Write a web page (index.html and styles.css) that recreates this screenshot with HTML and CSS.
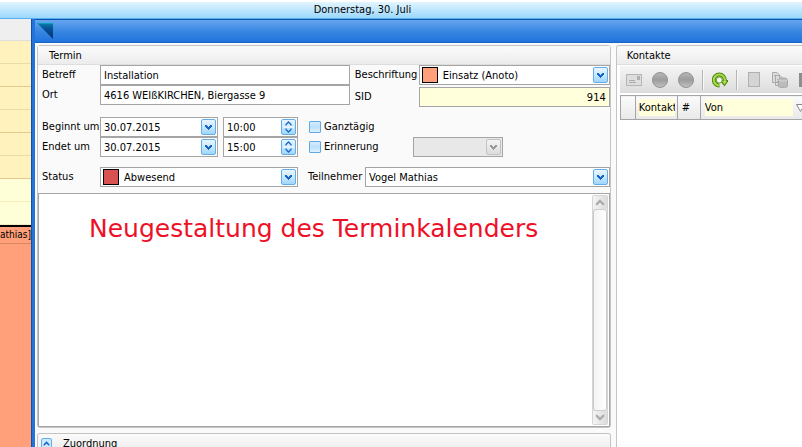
FILE: index.html
```html
<!DOCTYPE html>
<html lang="de">
  <head>
    <meta charset="UTF-8" />
    <meta name="viewport" content="width=device-width, initial-scale=1.0" />
    <title>Terminkalender</title>
    <link rel="stylesheet" href="styles.css">
  </head>
  <body>
    <!-- Shared glyphs -->
    <svg class="sprites" aria-hidden="true">
      <symbol id="arrow-down" viewBox="0 0 13 14">
        <path d="M3 5h2v1h1v1h1v-1h1v-1h2v2h-1v1h-1v1h-1v1h-1v-1h-1v-1h-1v-1h-1z" fill="currentColor" />
      </symbol>
      <symbol id="arrow-up" viewBox="0 0 13 14">
        <path d="M2 8L6.5 3.500L11 8V10H9.500L6.500 7L3.500 10H2Z" fill="currentColor" />
      </symbol>
      <symbol id="scroll-down" viewBox="0 0 13 14">
        <path d="M2 6L6.5 10.500L11 6V4H9.500L6.500 7L3.500 4H2Z" fill="currentColor" />
      </symbol>
      <symbol id="spin" viewBox="0 0 13 14">
        <path d="M4 5.500V4.500L6.500 2L9 4.500V5.500M4 8.500V9.500L6.500 12L9 9.500V8.500" fill="none" stroke="currentColor" stroke-width="1.300" />
        <path d="M1 7h11" stroke="#fff" />
      </symbol>
    </svg>

    <header class="day-header">Donnerstag, 30. Juli</header>

    <div class="workspace">
      <!-- Calendar behind the window -->
      <aside class="calendar">
        <div class="slot slot-head"></div>
        <div class="slot"></div>
        <div class="slot hour"></div>
        <div class="slot"></div>
        <div class="slot hour"></div>
        <div class="slot"></div>
        <div class="slot hour"></div>
        <div class="slot light"></div>
        <div class="slot light"></div>
        <div class="event"><span>athias]</span></div>
      </aside>

      <main class="window">
        <div class="title-bar">
          <svg class="logo" width="16" height="16" viewBox="0 0 16 16">
            <defs>
              <linearGradient id="logo-fill" x1="0" y1="0" x2="0" y2="1">
                <stop offset="0" stop-color="#0a83a8" />
                <stop offset="0.3" stop-color="#08559c" />
                <stop offset="1" stop-color="#03316f" />
              </linearGradient>
            </defs>
            <path d="M0 0H16V16Z" fill="url(#logo-fill)" />
            <path d="M0 0H16V1H1Z" fill="#0c9fb8" />
          </svg>
        </div>

        <div class="columns">
          <div class="left-column">
            <section class="panel appointment">
              <h2>Termin</h2>
              <form class="form">
                <div class="form-row top-fields">
                  <div class="field-group subject">
                    <label for="betreff">Betreff</label>
                    <input type="text" id="betreff" value="Installation" />
                    <label for="ort">Ort</label>
                    <input type="text" id="ort" value="4616 WEIßKIRCHEN, Biergasse 9" />
                  </div>
                  <div class="field-group caption">
                    <label for="beschriftung">Beschriftung</label>
                    <div class="combo swatched">
                      <span class="swatch orange"></span>
                      <select id="beschriftung"><option>Einsatz (Anoto)</option></select>
                      <svg class="drop"><use href="#arrow-down" /></svg>
                    </div>
                    <label for="sid">SID</label>
                    <input type="text" id="sid" class="number" value="914" />
                  </div>
                </div>

                <div class="form-row dates">
                  <label for="beginn">Beginnt um</label>
                  <div class="combo date">
                    <select id="beginn"><option>30.07.2015</option></select>
                    <svg class="drop"><use href="#arrow-down" /></svg>
                  </div>
                  <div class="combo">
                    <input type="text" value="10:00" aria-label="Beginnt um Uhrzeit" />
                    <svg class="drop"><use href="#spin" /></svg>
                  </div>
                  <div class="check">
                    <input type="checkbox" id="ganztag" />
                    <label for="ganztag">Ganztägig</label>
                  </div>
                  <span></span>

                  <label for="ende">Endet um</label>
                  <div class="combo date">
                    <select id="ende"><option>30.07.2015</option></select>
                    <svg class="drop"><use href="#arrow-down" /></svg>
                  </div>
                  <div class="combo">
                    <input type="text" value="15:00" aria-label="Endet um Uhrzeit" />
                    <svg class="drop"><use href="#spin" /></svg>
                  </div>
                  <div class="check">
                    <input type="checkbox" id="erinnerung" />
                    <label for="erinnerung">Erinnerung</label>
                  </div>
                  <div class="combo disabled">
                    <select disabled aria-label="Erinnerungszeit"></select>
                    <svg class="drop"><use href="#arrow-down" /></svg>
                  </div>
                </div>

                <div class="form-row people">
                  <label for="status">Status</label>
                  <div class="combo swatched">
                    <span class="swatch red"></span>
                    <select id="status"><option>Abwesend</option></select>
                    <svg class="drop"><use href="#arrow-down" /></svg>
                  </div>
                  <label for="teilnehmer" class="second">Teilnehmer</label>
                  <div class="combo">
                    <select id="teilnehmer"><option>Vogel Mathias</option></select>
                    <svg class="drop"><use href="#arrow-down" /></svg>
                  </div>
                </div>

                <div class="notes">
                  <textarea aria-label="Notiz" spellcheck="false">Neugestaltung des Terminkalenders</textarea>
                  <div class="scrollbar">
                    <button type="button" aria-label="Nach oben"><svg><use href="#arrow-up" /></svg></button>
                    <div class="thumb"></div>
                    <button type="button" aria-label="Nach unten"><svg><use href="#scroll-down" /></svg></button>
                  </div>
                </div>
              </form>
            </section>

            <section class="panel assignment">
              <h2>
                <button type="button" class="expand" aria-label="Aufklappen"><svg><use href="#arrow-up" /></svg></button>
                Zuordnung
              </h2>
            </section>
          </div>

          <section class="panel contacts">
            <h2>Kontakte</h2>
            <div class="toolbar">
              <button type="button" aria-label="E-Mail">
                <svg width="16" height="16" viewBox="0 0 16 16">
                  <rect x="0.5" y="2.5" width="15" height="11" fill="#dedede" stroke="#b5b5b5" />
                  <path d="M3 8.500h6M3 10.500h7" stroke="#aaa" />
                  <rect x="11" y="4" width="3" height="4" fill="#b0b0b0" />
                </svg>
              </button>
              <button type="button" aria-label="Anruf annehmen">
                <svg width="16" height="16" viewBox="0 0 16 16">
                  <circle cx="8" cy="8" r="7.5" fill="url(#ball)" stroke="#939393" />
                </svg>
              </button>
              <button type="button" aria-label="Anruf beenden">
                <svg width="16" height="16" viewBox="0 0 16 16">
                  <defs>
                    <linearGradient id="ball" x1="0" y1="0" x2="0" y2="1">
                      <stop offset="0" stop-color="#b8b8b8" />
                      <stop offset="0.5" stop-color="#9c9c9c" />
                      <stop offset="1" stop-color="#c2c2c2" />
                    </linearGradient>
                  </defs>
                  <circle cx="8" cy="8" r="7.5" fill="url(#ball)" stroke="#939393" />
                </svg>
              </button>
              <span class="divider"></span>
              <button type="button" aria-label="Aktualisieren">
                <svg width="16" height="16" viewBox="0 0 16 16">
                  <path d="M7.500 13.500A5.500 5.500 0 1 1 12.800 8V9" fill="none" stroke="#4f8a10" stroke-width="4" />
                  <path d="M8.500 8H16V9.500L12.500 14.500L8.500 9.500Z" fill="#4f8a10" />
                  <path d="M7.500 13.500A5.500 5.500 0 1 1 12.800 8V10" fill="none" stroke="#a8dc4a" stroke-width="2" />
                  <path d="M10 9H15L12.500 12.800Z" fill="#a8dc4a" />
                  <circle cx="7.300" cy="8" r="3" fill="#f5f9ee" stroke="#4f8a10" stroke-width="0.800" />
                </svg>
              </button>
              <span class="divider"></span>
              <button type="button" aria-label="Neu">
                <svg width="16" height="16" viewBox="0 0 16 16">
                  <rect x="2.500" y="0.500" width="11" height="14" fill="#d4d4d4" stroke="#b0b0b0" />
                </svg>
              </button>
              <button type="button" aria-label="Kopieren">
                <svg width="16" height="16" viewBox="0 0 16 16">
                  <path d="M0.500 0.500H5L7.500 3V10.500H0.500ZM3.500 3.500H8L10.500 6V13.500H3.500Z" fill="#dcdcdc" stroke="#aaa" />
                  <path d="M2 3.500h3M5 7.500h3M5 9.500h2" stroke="#aaa" />
                  <path d="M6.500 7.500C6.500 5.500 15.500 5.500 15.500 7.500V14C15.500 16 6.500 16 6.500 14Z" fill="#bcbcbc" stroke="#a8a8a8" />
                  <path d="M6.500 7.500C6.500 9.500 15.500 9.500 15.500 7.500" fill="none" stroke="#d8d8d8" />
                </svg>
              </button>
              <button type="button" aria-label="Speichern">
                <svg width="16" height="16" viewBox="0 0 16 16">
                  <rect x="1" y="1" width="14" height="14" fill="#8d8d8d" />
                </svg>
              </button>
            </div>
            <table class="contact-table">
              <thead>
                <tr>
                  <th class="marker"></th>
                  <th class="kontakt"><span>Kontakt</span></th>
                  <th class="count">#</th>
                  <th class="from"><div><span>Von</span>
                    <svg width="9" height="8" viewBox="0 0 9 8"><path d="M0.500 0.500H8.500L4.500 7.500Z" fill="#fff" stroke="#888" /></svg>
                  </div></th>
                </tr>
              </thead>
              <tbody></tbody>
            </table>
          </section>
        </div>
      </main>
    </div>
  </body>
</html>
```

FILE: styles.css
```css
* {
  box-sizing: border-box;
}

body {
  margin: 0;
  height: 100vh;
  overflow: hidden;
  display: flex;
  flex-direction: column;
  font-family: "DejaVu Sans Condensed", "DejaVu Sans", sans-serif;
  font-stretch: condensed;
  font-size: 11px;
  line-height: 14px;
  color: #000;
  background-color: #fff;
}

.sprites {
  display: none;
}

input,
select,
textarea,
button {
  font: inherit;
  color: inherit;
  margin: 0;
}

.day-header {
  flex: none;
  height: 19px;
  padding: 1px 77px 0 0;
  border-top: 2px solid #fff;
  border-bottom: 1px solid #58b0ee;
  text-align: center;
  background: linear-gradient(#e2f5ff, #bfe6fd 50%, #9bd8fc);
}

.workspace {
  flex: 1;
  display: flex;
  min-height: 0;
}

/* Calendar */
.calendar {
  flex: none;
  width: 32px;
  display: flex;
  flex-direction: column;
  overflow: hidden;
  border-right: 1px solid #1550a8;
}

.slot {
  flex: none;
  height: 23px;
  background-color: #fff2bd;
  border-bottom: 1px solid #e9dcaa;
}

.slot.hour {
  border-color: #e8c78e;
}

.slot.light {
  background-color: #ffffd7;
  border-color: #f5ecc0;
}

.slot-head {
  height: 22px;
  background-color: #efefef;
  border-color: #ddd;
}

.event {
  flex: 1;
  background-color: #ffa07a;
  border-top: 2px solid #000;
}

.event span {
  display: block;
  height: 17px;
  padding-top: 1px;
  font-size: 10px;
  border-bottom: 1px solid #d98663;
}

/* Appointment window */
.window {
  flex: 1;
  min-width: 0;
  display: flex;
  flex-direction: column;
  border-left: 3px solid #2273dc;
  background-color: #fafafa;
}

.title-bar {
  flex: none;
  height: 24px;
  padding: 3px 2px;
  border-top: 1px solid #0d52ad;
  border-bottom: 1px solid #1c63c4;
  background: linear-gradient(#66a5ee, #3a87e2 50%, #1f74dc);
}

.logo {
  display: block;
}

.columns {
  flex: 1;
  min-height: 0;
  display: grid;
  grid-template-columns: 75% 1fr;
  column-gap: 5px;
  padding: 2px 0 0 2px;
}

.left-column {
  display: flex;
  flex-direction: column;
  gap: 5px;
  min-height: 0;
}

.panel {
  border: 1px solid #c4c4c4;
  border-radius: 3px;
  background-color: #fafafa;
}

.panel h2 {
  height: 19px;
  margin: 0;
  padding: 3px 11px;
  font-size: 11px;
  font-weight: normal;
  border-bottom: 1px solid #ddd;
  background: linear-gradient(#fbfbfb, #ececec);
}

.appointment {
  flex: 1;
  display: flex;
  flex-direction: column;
}

.form {
  flex: 1;
  display: flex;
  flex-direction: column;
  gap: 10px;
}

.form-row {
  padding-left: 4px;
  align-items: center;
}

.form-row.top-fields {
  display: flex;
  align-items: flex-start;
  gap: 5px;
}

.field-group {
  display: grid;
  align-items: center;
}

.subject {
  flex: 1;
  grid-template-columns: 58px 1fr;
}

.caption {
  grid-template-columns: 64px 191px;
  row-gap: 2px;
}

.dates {
  display: grid;
  grid-template-columns: 58px 123px 75px 115px 90px;
}

.people {
  display: grid;
  grid-template-columns: 58px 198px 67px 1fr;
}

.people .second {
  padding-left: 10px;
}

input[type="text"],
select {
  appearance: none;
  display: block;
  width: 100%;
  height: 20px;
  padding: 0 3px;
  border: 1px solid #a5a5a5;
  border-radius: 0;
  background-color: #fff;
  opacity: 1;
}

select {
  padding-top: 1px;
}

input.number {
  text-align: right;
  background-color: #ffffdc;
}

.combo {
  position: relative;
}

.combo.date {
  margin-right: 5px;
}

.swatched select {
  padding-left: 23px;
}

.swatch {
  position: absolute;
  left: 3px;
  top: 2px;
  width: 16px;
  height: 16px;
  border: 1px solid #000;
}

.swatch.orange {
  background-color: #ffa07a;
}

.swatch.red {
  background-color: #d85252;
}

.drop {
  position: absolute;
  right: 2px;
  top: 2px;
  width: 15px;
  height: 16px;
  border: 1px solid #62aee9;
  border-radius: 2px;
  color: #1767c8;
  background: linear-gradient(#e9f6ff, #c9e8fd 50%, #9fd6fb);
  pointer-events: none;
}

.disabled select {
  background-color: #e8e8e8;
}

.disabled .drop {
  color: #999;
  border-color: #c2c2c2;
  background: linear-gradient(#f4f4f4, #dcdcdc);
}

.check {
  display: flex;
  align-items: center;
  gap: 3px;
  padding-left: 11px;
}

.check input {
  appearance: none;
  width: 12px;
  height: 12px;
  border: 1px solid #62a9e2;
  border-radius: 1px;
  background: linear-gradient(#d5edfd, #b9e0fb 50%, #dff2fe);
}

.notes {
  flex: 1;
  display: flex;
  margin-top: -4px;
  padding: 1px 1px 1px 0;
  border: 1px solid #a5a5a5;
  background-color: #fff;
}

.notes textarea {
  flex: 1;
  min-width: 0;
  padding: 20px 50px;
  border: 0;
  outline: 0;
  resize: none;
  overflow: hidden;
  background-color: #fff;
  font-family: "DejaVu Sans", sans-serif;
  font-stretch: normal;
  font-size: 25px;
  line-height: 28px;
  color: #ed1128;
}

.scrollbar {
  width: 16px;
  display: flex;
  flex-direction: column;
  border: 1px solid #d5d5d5;
  border-radius: 2px;
  background-color: #e8e8e8;
}

.scrollbar button {
  height: 13px;
  padding: 0;
  border: 0;
  color: #aaa;
  background: linear-gradient(90deg, #f4f4f4, #dcdcdc);
}

.scrollbar svg {
  display: block;
  width: 14px;
  height: 13px;
}

.thumb {
  flex: 1;
  border: 1px solid #ccc;
  border-radius: 3px;
  background: linear-gradient(90deg, #f3f3f3, #fff);
}

.assignment {
  height: 14px;
  border-bottom: 0;
  border-radius: 3px 3px 0 0;
  overflow: hidden;
}

.assignment h2 {
  display: flex;
  gap: 11px;
  padding: 3px;
}

.expand {
  width: 11px;
  height: 11px;
  margin-top: 1px;
  padding: 0;
  border: 1px solid #62aee9;
  border-radius: 2px;
  color: #1767c8;
  background-color: #cdeafd;
}

.expand svg {
  display: block;
  width: 9px;
  height: 9px;
}

/* Contacts */
.contacts {
  min-width: 0;
  display: flex;
  flex-direction: column;
  border-right: 0;
  border-bottom: 0;
  border-radius: 3px 0 0 0;
  overflow: hidden;
  background-color: #fff;
}

.contacts h2 {
  padding: 3px 10px;
}

.toolbar {
  flex: none;
  display: flex;
  align-items: center;
  gap: 10px;
  height: 27px;
  margin: 1px 0 2px 3px;
  padding-left: 6px;
  background: linear-gradient(#f5f5f5, #dcdcdc);
}

.toolbar button {
  flex: none;
  width: 16px;
  height: 16px;
  padding: 0;
  border: 0;
  background: none;
}

.toolbar svg {
  display: block;
}

.divider {
  flex: none;
  width: 2px;
  height: 20px;
  margin: 0 -2px;
  background-color: #b5b5b5;
  border-right: 1px solid #f8f8f8;
}

.contact-table {
  width: 190px;
  margin-left: 3px;
  table-layout: fixed;
  border-collapse: collapse;
  border-top: 1px solid #a5a5a5;
}

.contact-table th {
  height: 24px;
  padding: 0 4px;
  overflow: hidden;
  border: 1px solid #a5a5a5;
  font-weight: normal;
  text-align: left;
  background: linear-gradient(#fbfbfb, #e8e8e8);
}

.contact-table th span {
  display: block;
  flex: 1;
  height: 17px;
  line-height: 17px;
  overflow: hidden;
  background-color: #ffffdc;
}

.contact-table .marker {
  width: 15px;
}

.contact-table .kontakt {
  width: 42px;
  padding: 0 2px 0 3px;
}

.contact-table .count {
  width: 23px;
}

.contact-table .from div {
  display: flex;
  align-items: center;
  gap: 3px;
}
```
